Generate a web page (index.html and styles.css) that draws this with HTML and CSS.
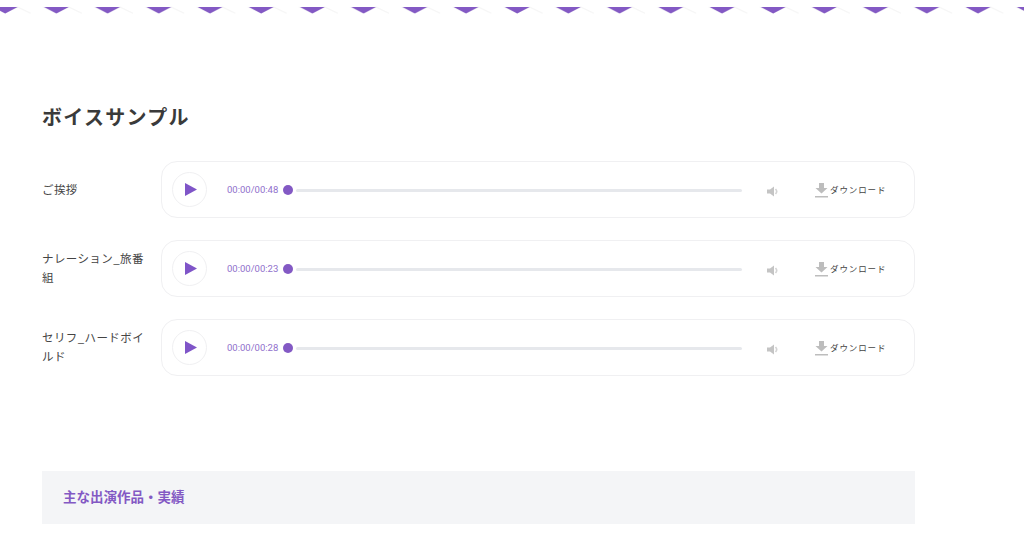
FILE: index.html
```html
<!DOCTYPE html>
<html lang="ja">
<head>
<meta charset="utf-8">
<title>ボイスサンプル</title>
<link rel="stylesheet" href="styles.css">
</head>
<body>
<svg class="zigzag" width="1024" height="15" aria-hidden="true">
  <defs>
    <pattern id="zz" width="51.2" height="15" patternUnits="userSpaceOnUse" x="-20.6">
      <polyline points="0,7 13.2,13 25.6,7 38.4,13 51.2,7" transform="translate(12.4 0)" fill="none" stroke="#f6f6f6" stroke-width="1.2"/>
      <polygon points="13.4,7 38.2,7 25.8,13.5" fill="#8359c4"/>
    </pattern>
  </defs>
  <rect width="1024" height="15" fill="url(#zz)"/>
</svg>
<main class="content">
  <h2 class="title">ボイスサンプル</h2>
  <div class="samples">
    <div class="sample">
      <div class="label">ご挨拶</div>
      <div class="player">
        <button class="play"><svg width="12" height="13" viewBox="0 0 12 13"><polygon points="0,0 12,6.5 0,13" fill="#7f55c8"/></svg></button>
        <span class="time">00:00/00:48</span>
        <div class="track"><span class="knob"></span><span class="bar"></span></div>
        <svg class="vol" width="13" height="11" viewBox="0 0 13 11"><path d="M0 3.500h3L7 .5v10l-4-3H0z" fill="#c4c4c4"/><path d="M8.500 3a3.600 3.600 0 0 1 0 5" fill="none" stroke="#d4d4d4" stroke-width="1.600"/></svg>
        <a class="dl"><svg width="13" height="15" viewBox="0 0 13 15"><path d="M4 0h5v5h3.500L6.500 10.500 .5 5H4z" fill="#bdbdbd"/><rect y="13" width="13" height="1.500" fill="#bdbdbd"/></svg><span>ダウンロード</span></a>
      </div>
    </div>
    <div class="sample">
      <div class="label label-wrap">ナレーション_旅番組</div>
      <div class="player">
        <button class="play"><svg width="12" height="13" viewBox="0 0 12 13"><polygon points="0,0 12,6.5 0,13" fill="#7f55c8"/></svg></button>
        <span class="time">00:00/00:23</span>
        <div class="track"><span class="knob"></span><span class="bar"></span></div>
        <svg class="vol" width="13" height="11" viewBox="0 0 13 11"><path d="M0 3.500h3L7 .5v10l-4-3H0z" fill="#c4c4c4"/><path d="M8.500 3a3.600 3.600 0 0 1 0 5" fill="none" stroke="#d4d4d4" stroke-width="1.600"/></svg>
        <a class="dl"><svg width="13" height="15" viewBox="0 0 13 15"><path d="M4 0h5v5h3.500L6.500 10.500 .5 5H4z" fill="#bdbdbd"/><rect y="13" width="13" height="1.500" fill="#bdbdbd"/></svg><span>ダウンロード</span></a>
      </div>
    </div>
    <div class="sample">
      <div class="label label-wrap">セリフ_ハードボイルド</div>
      <div class="player">
        <button class="play"><svg width="12" height="13" viewBox="0 0 12 13"><polygon points="0,0 12,6.5 0,13" fill="#7f55c8"/></svg></button>
        <span class="time">00:00/00:28</span>
        <div class="track"><span class="knob"></span><span class="bar"></span></div>
        <svg class="vol" width="13" height="11" viewBox="0 0 13 11"><path d="M0 3.500h3L7 .5v10l-4-3H0z" fill="#c4c4c4"/><path d="M8.500 3a3.600 3.600 0 0 1 0 5" fill="none" stroke="#d4d4d4" stroke-width="1.600"/></svg>
        <a class="dl"><svg width="13" height="15" viewBox="0 0 13 15"><path d="M4 0h5v5h3.500L6.500 10.500 .5 5H4z" fill="#bdbdbd"/><rect y="13" width="13" height="1.500" fill="#bdbdbd"/></svg><span>ダウンロード</span></a>
      </div>
    </div>
  </div>
  <div class="works">主な出演作品・実績</div>
</main>
</body>
</html>
```
FILE: styles.css
```css
* { box-sizing: border-box; }
html, body { margin: 0; padding: 0; background: #fff; overflow: hidden; }
body {
  height: 538px;
  font-family: "Noto Sans CJK JP", "Noto Sans", sans-serif;
  color: #3c3c3c;
}
.zigzag { display: block; }
.content { width: 873px; margin-left: 42px; }
.title {
  margin: 87px 0 0;
  font-size: 20px;
  line-height: 30px;
  font-weight: 700;
  letter-spacing: 1.300px;
  color: #3a3a3a;
}
.samples { margin-top: 29px; display: flex; flex-direction: column; gap: 22px; }
.sample { display: flex; align-items: center; }
.label {
  width: 119px;
  flex: none;
  padding-right: 12px;
  font-size: 11.500px;
  line-height: 19px;
  letter-spacing: 0.400px;
  color: #444;
}
.label-wrap { padding-bottom: 1px; }
.player {
  flex: 1;
  height: 57px;
  display: flex;
  align-items: center;
  padding-left: 10px;
  border: 1px solid #f0f0f2;
  border-radius: 16px;
  background: #fff;
}
.play {
  width: 35px;
  height: 35px;
  flex: none;
  margin: 0;
  padding: 0 0 0 2px;
  display: flex;
  align-items: center;
  justify-content: center;
  border: 1px solid #f0f0f2;
  border-radius: 50%;
  background: #fff;
}
.time {
  margin-left: 20px;
  width: 52px;
  flex: none;
  font-family: "Roboto", sans-serif;
  font-size: 9.500px;
  line-height: 12px;
  color: #9070cc;
  white-space: nowrap;
}
.track { width: 459px; flex: none; margin-left: 4px; display: flex; align-items: center; }
.knob { width: 10px; height: 10px; flex: none; border-radius: 50%; background: #8359c4; }
.bar { flex: 1; height: 3.500px; margin-left: 3px; margin-top: 2px; border-radius: 2px; background: #e6e8ec; }
.vol { flex: none; margin-left: 25px; margin-top: 3px; }
.dl { display: flex; align-items: flex-end; margin-left: 35px; margin-top: 2px; }
.dl span {
  font-size: 8.500px;
  line-height: 12px;
  letter-spacing: 0.900px;
  margin-left: 2px;
  margin-bottom: 3px;
  color: #444;
  white-space: nowrap;
}
.works {
  margin-top: 95px;
  height: 53px;
  display: flex;
  align-items: center;
  padding-left: 21px;
  padding-bottom: 4px;
  background: #f4f5f7;
  font-size: 13.500px;
  font-weight: 700;
  color: #8359c4;
}
```
